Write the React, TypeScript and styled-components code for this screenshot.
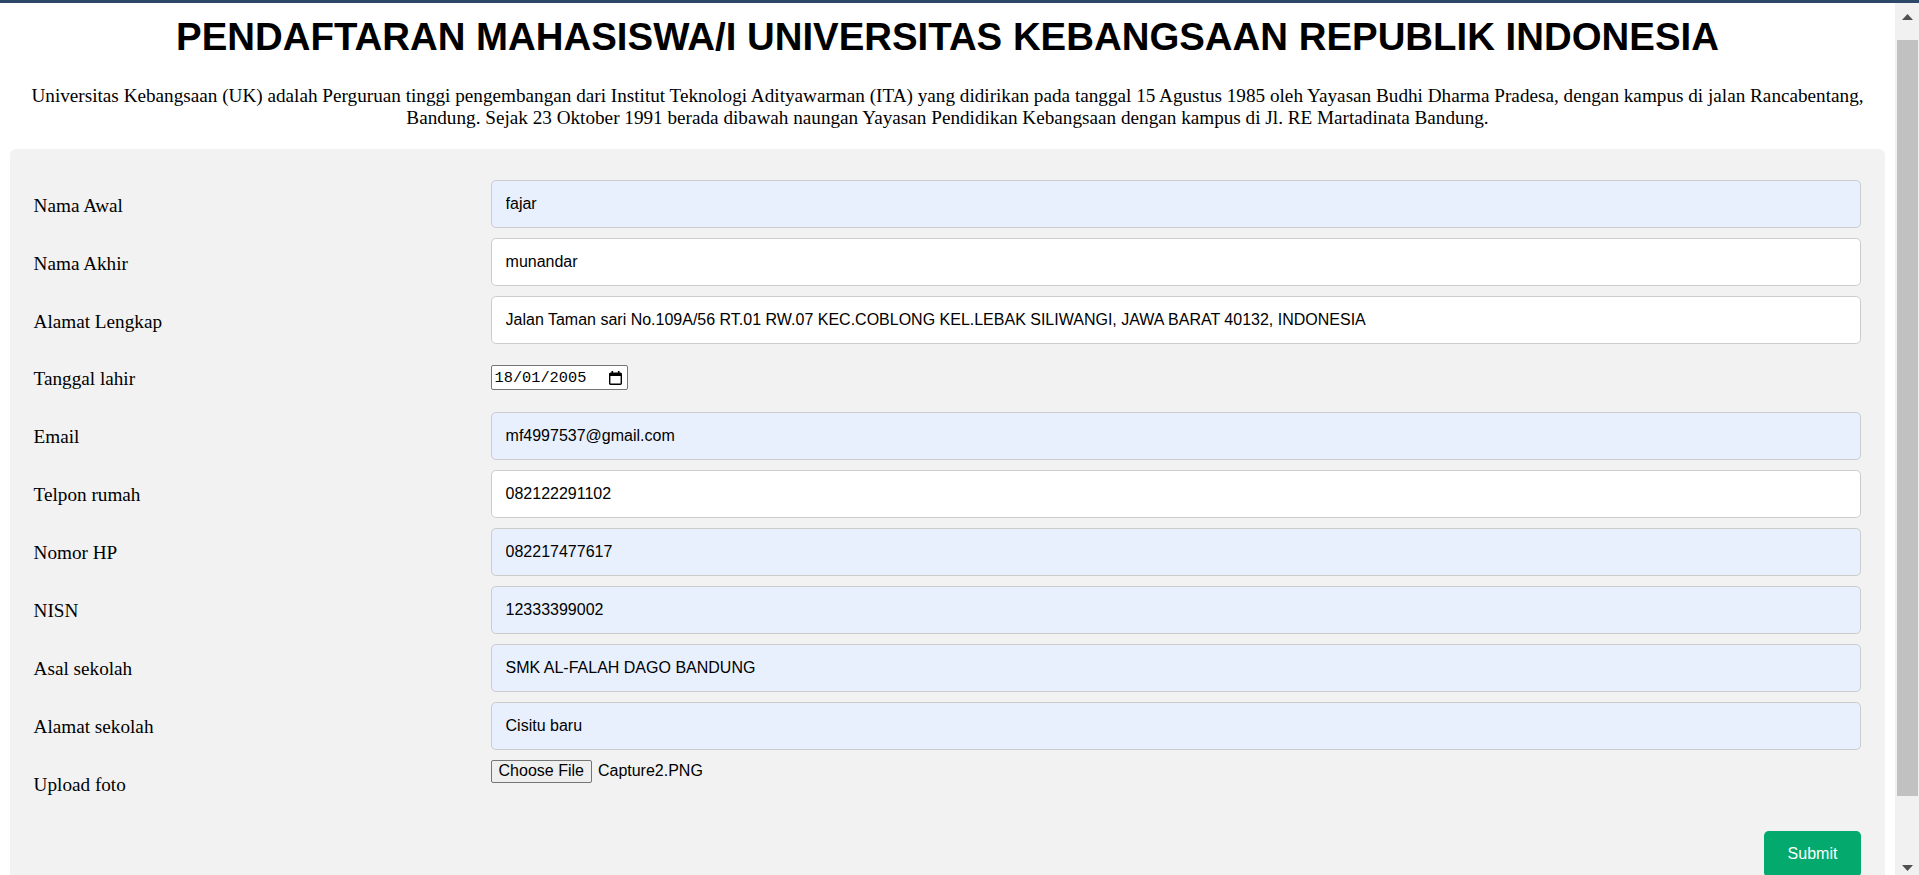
import React, { useLayoutEffect, useRef } from "react";
import styled, { createGlobalStyle } from "styled-components";

const GlobalStyle = createGlobalStyle`
  html, body {
    margin: 0;
    padding: 0;
    height: 100%;
    overflow: hidden;
    background: #ffffff;
  }
  #root { height: 100%; }
  *, *::before, *::after { box-sizing: border-box; }
`;

const Shell = styled.div`
  display: flex;
  flex-direction: column;
  height: 100vh;
`;

const TopBar = styled.div`
  flex: none;
  height: 3px;
  background: #2c4767;
`;

const Viewport = styled.div`
  flex: 1;
  min-height: 0;
  display: flex;
`;

const Scroller = styled.main`
  flex: 1;
  min-width: 0;
  overflow-y: scroll;
  overflow-x: hidden;
  scrollbar-width: none;
  &::-webkit-scrollbar { display: none; }
`;

const ScrollRail = styled.div`
  flex: none;
  width: 24px;
  display: flex;
  flex-direction: column;
  background: #f1f1f1;
`;

const RailButton = styled.div<{ $down?: boolean }>`
  flex: none;
  height: 24px;
  display: flex;
  justify-content: center;
  align-items: ${(p) => (p.$down ? "flex-end" : "flex-start")};
  padding: ${(p) => (p.$down ? "0 0 4px 1px" : "11px 0 0 1px")};
`;

const RailTrack = styled.div`
  flex: 1;
  padding: 13px 1px 0 2px;
`;

const RailThumb = styled.div`
  height: 756px;
  background: #c1c1c1;
`;

const Page = styled.div`
  padding: 0 9.6px 9.6px;
`;

const Title = styled.h1`
  margin: 27px 0 26px;
  text-align: center;
  font-family: "Liberation Sans", Arial, sans-serif;
  font-weight: 700;
  font-size: 38.4px;
  line-height: normal;
  color: #000;
`;

const Intro = styled.p`
  margin: 0 0 20px;
  text-align: center;
  font-family: "Liberation Serif", "Times New Roman", serif;
  font-size: 19.2px;
  line-height: normal;
  color: #000;
`;

const Card = styled.form`
  background: #f2f2f2;
  border-radius: 6px;
  padding: 24px 24px 48px;
`;

const Row = styled.div`
  display: flex;
  align-items: flex-start;
`;

const LabelCol = styled.div`
  width: 25%;
  margin-top: 7.2px;
`;

const FieldCol = styled.div`
  width: 75%;
  margin-top: 7.2px;
`;

const Label = styled.label`
  display: inline-block;
  padding: 14.4px 14.4px 14.4px 0;
  font-family: "Liberation Serif", "Times New Roman", serif;
  font-size: 19.2px;
  line-height: normal;
  color: #000;
`;

const TextInput = styled.input<{ $filled?: boolean }>`
  display: block;
  width: 100%;
  margin: 0;
  padding: 14px;
  border: 1px solid #cccccc;
  border-radius: 4.8px;
  background: ${(p) => (p.$filled ? "#e8f0fe" : "#ffffff")};
  font-family: "Liberation Sans", Arial, sans-serif;
  font-size: 16px;
  line-height: normal;
  color: #000;
  outline: none;
`;

const DateBox = styled.div`
  display: inline-flex;
  align-items: center;
  justify-content: space-between;
  margin-top: 11px;
  width: 137px;
  height: 25px;
  padding: 0 5px 0 3px;
  border: 1px solid #767676;
  border-radius: 2px;
  background: #ffffff;
  font-family: "Liberation Mono", "DejaVu Sans Mono", monospace;
  font-size: 15.3px;
  color: #000;
`;

const FileRow = styled.div`
  display: flex;
  align-items: center;
  gap: 6px;
  font-family: "Liberation Sans", Arial, sans-serif;
  font-size: 16px;
  color: #000;
`;

const FileButton = styled.button`
  height: 23px;
  padding: 0 7px;
  border: 1px solid #767676;
  border-radius: 2px;
  background: #efefef;
  font-family: "Liberation Sans", Arial, sans-serif;
  font-size: 16px;
  line-height: normal;
  color: #000;
`;

const SubmitRow = styled.div`
  display: flex;
  justify-content: flex-end;
  margin-top: 20px;
`;

const SubmitButton = styled.button`
  padding: 14.4px 24px;
  border: none;
  border-radius: 4.8px;
  background: #04aa6d;
  font-family: "Liberation Sans", Arial, sans-serif;
  font-size: 16px;
  line-height: normal;
  color: #ffffff;
`;

const CalendarIcon = () => (
  <svg width="13" height="14" viewBox="0 0 13 14" aria-hidden="true">
    <rect x="2.5" y="0" width="1.6" height="3" fill="#000" />
    <rect x="8.9" y="0" width="1.6" height="3" fill="#000" />
    <rect x="0.7" y="2.2" width="11.6" height="11.1" rx="1" fill="none" stroke="#000" strokeWidth="1.4" />
    <rect x="0.7" y="2.2" width="11.6" height="2.8" fill="#000" />
  </svg>
);

const Arrow = ({ down }: { down?: boolean }) => (
  <svg width="11" height="6" viewBox="0 0 11 6" aria-hidden="true">
    <path d={down ? "M0 0 H11 L5.5 6 Z" : "M0 6 H11 L5.5 0 Z"} fill="#505050" />
  </svg>
);

type Field = { label: string; value: string; filled: boolean };

const fieldsTop: Field[] = [
  { label: "Nama Awal", value: "fajar", filled: true },
  { label: "Nama Akhir", value: "munandar", filled: false },
  {
    label: "Alamat Lengkap",
    value:
      "Jalan Taman sari No.109A/56 RT.01 RW.07 KEC.COBLONG KEL.LEBAK SILIWANGI, JAWA BARAT 40132, INDONESIA",
    filled: false,
  },
];

const fieldsBottom: Field[] = [
  { label: "Email", value: "mf4997537@gmail.com", filled: true },
  { label: "Telpon rumah", value: "082122291102", filled: false },
  { label: "Nomor HP", value: "082217477617", filled: true },
  { label: "NISN", value: "12333399002", filled: true },
  { label: "Asal sekolah", value: "SMK AL-FALAH DAGO BANDUNG", filled: true },
  { label: "Alamat sekolah", value: "Cisitu baru", filled: true },
];

const TextRow = ({ f }: { f: Field }) => (
  <Row>
    <LabelCol>
      <Label>{f.label}</Label>
    </LabelCol>
    <FieldCol>
      <TextInput type="text" defaultValue={f.value} $filled={f.filled} />
    </FieldCol>
  </Row>
);

export default function App() {
  const scrollRef = useRef<HTMLElement>(null);

  useLayoutEffect(() => {
    if (scrollRef.current) scrollRef.current.scrollTop = 15;
  }, []);

  return (
    <>
      <GlobalStyle />
      <Shell>
        <TopBar />
        <Viewport>
          <Scroller ref={scrollRef}>
            <Page>
              <Title>PENDAFTARAN MAHASISWA/I UNIVERSITAS KEBANGSAAN REPUBLIK INDONESIA</Title>
              <Intro>
                Universitas Kebangsaan (UK) adalah Perguruan tinggi pengembangan dari Institut Teknologi
                Adityawarman (ITA) yang didirikan pada tanggal 15 Agustus 1985 oleh Yayasan Budhi Dharma
                Pradesa, dengan kampus di jalan Rancabentang, Bandung. Sejak 23 Oktober 1991 berada dibawah
                naungan Yayasan Pendidikan Kebangsaan dengan kampus di Jl. RE Martadinata Bandung.
              </Intro>
              <Card onSubmit={(e) => e.preventDefault()}>
                {fieldsTop.map((f) => (
                  <TextRow key={f.label} f={f} />
                ))}
                <Row>
                  <LabelCol>
                    <Label>Tanggal lahir</Label>
                  </LabelCol>
                  <FieldCol>
                    <DateBox>
                      <span>18/01/2005</span>
                      <CalendarIcon />
                    </DateBox>
                  </FieldCol>
                </Row>
                {fieldsBottom.map((f) => (
                  <TextRow key={f.label} f={f} />
                ))}
                <Row>
                  <LabelCol>
                    <Label>Upload foto</Label>
                  </LabelCol>
                  <FieldCol>
                    <FileRow>
                      <FileButton type="button">Choose File</FileButton>
                      <span>Capture2.PNG</span>
                    </FileRow>
                  </FieldCol>
                </Row>
                <SubmitRow>
                  <SubmitButton type="submit">Submit</SubmitButton>
                </SubmitRow>
              </Card>
            </Page>
          </Scroller>
          <ScrollRail aria-hidden="true">
            <RailButton>
              <Arrow />
            </RailButton>
            <RailTrack>
              <RailThumb />
            </RailTrack>
            <RailButton $down>
              <Arrow down />
            </RailButton>
          </ScrollRail>
        </Viewport>
      </Shell>
    </>
  );
}
